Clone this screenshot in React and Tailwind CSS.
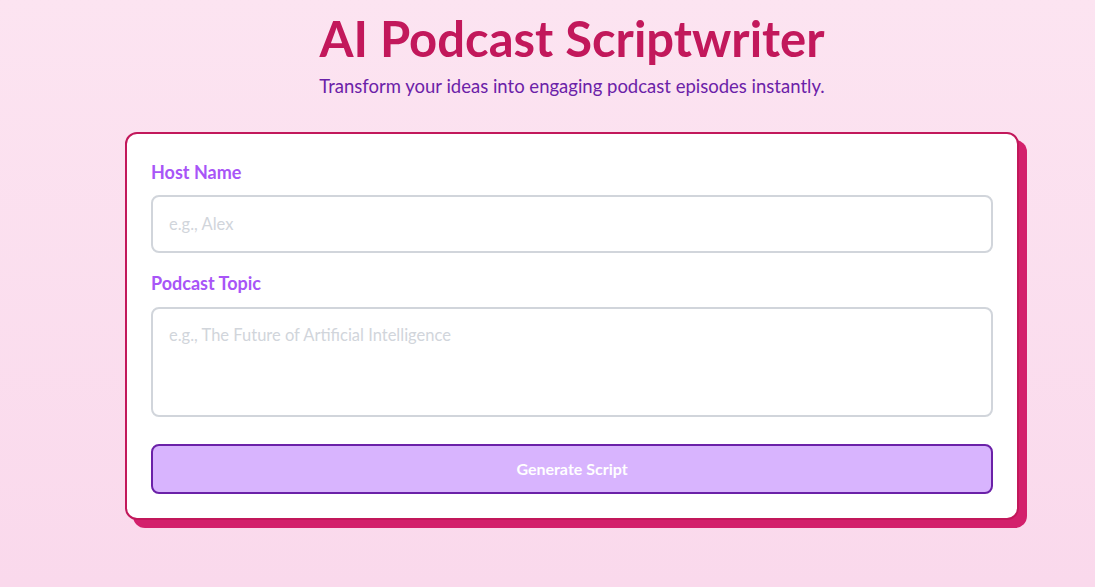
import React, { useState } from 'react';

const font = { fontFamily: 'Lato, "Noto Sans", sans-serif' };

export default function App() {
  const [host, setHost] = useState('');
  const [topic, setTopic] = useState('');

  return (
    <div
      className="min-h-screen w-full bg-gradient-to-b from-[#fce4f1] to-[#fad9ec] pl-[49px] pt-[10px] pb-10"
      style={font}
    >
      <div className="mx-auto flex w-[894px] flex-col items-center">
        <h1 className="text-[49px] font-bold leading-[56px] text-[#c2185b]">AI Podcast Scriptwriter</h1>
        <p className="mt-[8px] text-[18.5px] leading-[24px] text-[#6b21a8]">
          Transform your ideas into engaging podcast episodes instantly.
        </p>

        <div className="mt-[34px] w-full rounded-xl border-2 border-[#c2185b] bg-white p-6 shadow-[8px_8px_0_#d3206c]">
          <label className="block text-lg font-bold leading-7 text-[#a855f7]">Host Name</label>
          <input
            value={host}
            onChange={e => setHost(e.target.value)}
            placeholder="e.g., Alex"
            className="mt-[9px] block h-[58px] w-full rounded-lg border-2 border-[#d1d5db] px-4 text-[16.5px] text-gray-700 placeholder:text-[#d1d5db] focus:outline-none"
          />

          <label className="mt-4 block text-lg font-bold leading-7 text-[#a855f7]">Podcast Topic</label>
          <textarea
            value={topic}
            onChange={e => setTopic(e.target.value)}
            placeholder="e.g., The Future of Artificial Intelligence"
            className="mt-[10px] block h-[110px] w-full resize-none rounded-lg border-2 border-[#d1d5db] px-4 pt-[14px] pb-4 text-[16.5px] text-gray-700 placeholder:text-[#d1d5db] focus:outline-none"
          />

          <button
            type="button"
            disabled={!host || !topic}
            className="mt-[27px] block h-[50px] w-full rounded-lg border-2 border-[#6b21a8] bg-[#d8b4fe] text-base font-bold text-white"
          >
            Generate Script
          </button>
        </div>
      </div>
    </div>
  );
}
